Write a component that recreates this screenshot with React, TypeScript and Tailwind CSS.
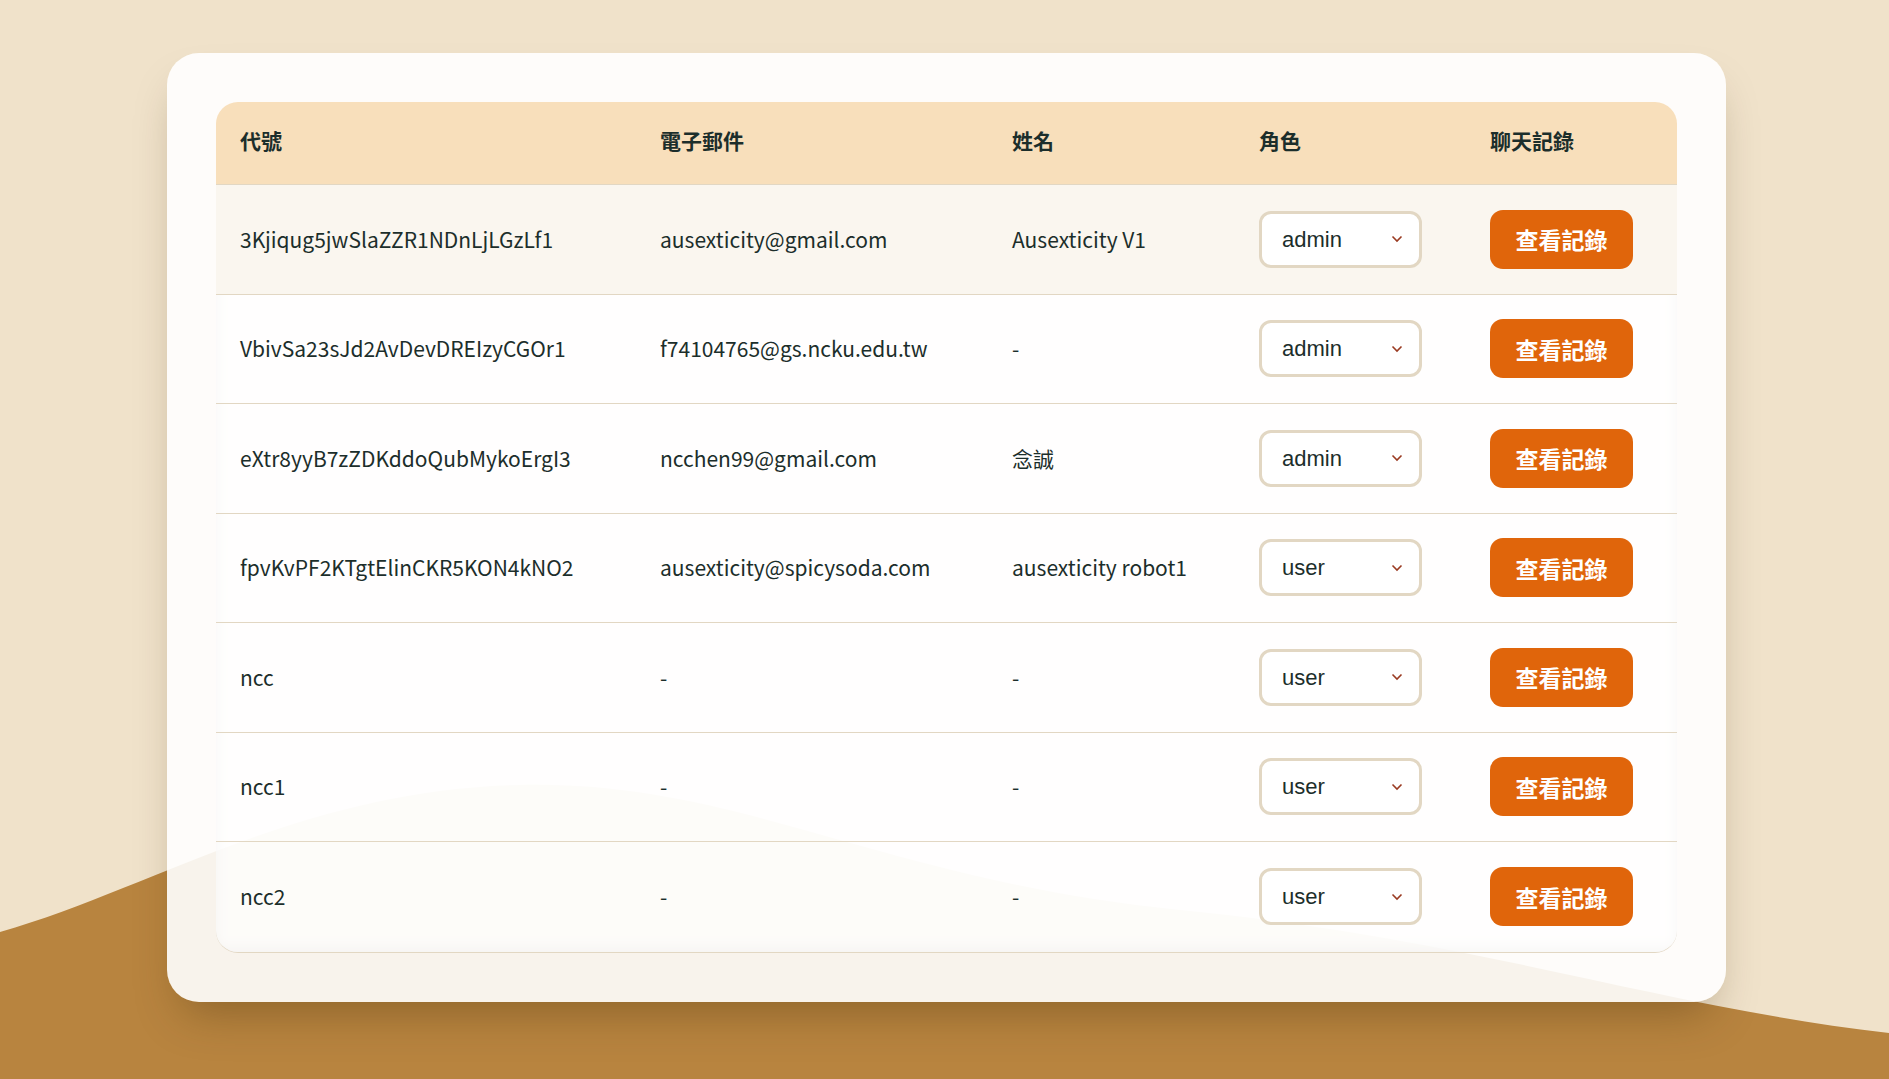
import React from 'react'

const users = [
  { id: '3Kjiqug5jwSlaZZR1NDnLjLGzLf1', email: 'ausexticity@gmail.com', name: 'Ausexticity V1', role: 'admin' },
  { id: 'VbivSa23sJd2AvDevDREIzyCGOr1', email: 'f74104765@gs.ncku.edu.tw', name: '-', role: 'admin' },
  { id: 'eXtr8yyB7zZDKddoQubMykoErgI3', email: 'ncchen99@gmail.com', name: '念誠', role: 'admin' },
  { id: 'fpvKvPF2KTgtElinCKR5KON4kNO2', email: 'ausexticity@spicysoda.com', name: 'ausexticity robot1', role: 'user' },
  { id: 'ncc', email: '-', name: '-', role: 'user' },
  { id: 'ncc1', email: '-', name: '-', role: 'user' },
  { id: 'ncc2', email: '-', name: '-', role: 'user' },
]

const headers = ['代號', '電子郵件', '姓名', '角色', '聊天記錄']

function Wave() {
  return (
    <svg
      className="absolute inset-0 w-full h-full"
      viewBox="0 0 1889 1079"
      preserveAspectRatio="none"
    >
      <path
        d="M0,932 C150,890 300,790 520,785 C740,780 880,880 1180,910 C1480,940 1650,1005 1889,1033 L1889,1079 L0,1079 Z"
        fill="#b8843f"
      />
    </svg>
  )
}

function RoleSelect({ role }: { role: string }) {
  return (
    <div className="relative w-[163px] h-[57px]">
      <select
        defaultValue={role}
        className="appearance-none w-full h-full rounded-[12px] border-[3px] border-[#e2d7c3] bg-white pl-[20px] pr-10 text-[22px] text-[#1c2e2b] outline-none"
        style={{ fontFamily: '"Liberation Sans", Arial, sans-serif' }}
      >
        <option value="admin">admin</option>
        <option value="user">user</option>
      </select>
      <svg
        className="pointer-events-none absolute right-[19px] top-1/2 -translate-y-1/2"
        width="12"
        height="8"
        viewBox="0 0 12 8"
        fill="none"
      >
        <path d="M1.5 1.5 L6 6 L10.5 1.5" stroke="#9a3b22" strokeWidth="1.6" />
      </svg>
    </div>
  )
}

export default function App() {
  return (
    <div
      className="relative min-h-screen w-full overflow-hidden bg-[#f0e2ca]"
      style={{ fontFamily: '"Noto Sans CJK TC", "Noto Sans", sans-serif' }}
    >
      <Wave />
      <div className="relative z-10 pt-[53px] pb-[77px]">
        <div className="ml-[167px] w-[1559px] rounded-[32px] bg-white/90 p-[49px] shadow-[0_25px_45px_-15px_rgba(60,40,10,0.35)]">
          <div className="rounded-[22px] overflow-hidden border-b border-[#e2d7c3]">
            <div className="grid grid-cols-[420px_352px_247px_231px_1fr] h-[83px] items-center pb-1 bg-[#f8dfbb] border-b border-[#e2d7c3] text-[21px] font-bold text-[#1c2e2b]">
              {headers.map((h) => (
                <div key={h} className="pl-6">{h}</div>
              ))}
            </div>
            <div className="shadow-[inset_0_-14px_16px_-12px_rgba(0,0,0,0.13),inset_14px_0_14px_-14px_rgba(0,0,0,0.1),inset_-14px_0_14px_-14px_rgba(0,0,0,0.1)]">
              {users.map((u, i) => (
                <div
                  key={u.id}
                  className={`grid grid-cols-[420px_352px_247px_231px_1fr] h-[109.5px] items-center text-[21px] text-[#1c2e2b] ${
                    i < users.length - 1 ? 'border-b border-[#e2d7c3]' : ''
                  } ${i === 0 ? 'bg-[#faf6ef]' : 'bg-white/70'}`}
                >
                  <div className="pl-6">{u.id}</div>
                  <div className="pl-6">{u.email}</div>
                  <div className="pl-6">{u.name}</div>
                  <div className="pl-6">
                    <RoleSelect role={u.role} />
                  </div>
                  <div className="pl-6">
                    <button className="h-[59px] w-[143px] rounded-[13px] bg-[#e0650b] text-[23px] font-bold text-white">
                      查看記錄
                    </button>
                  </div>
                </div>
              ))}
            </div>
          </div>
        </div>
      </div>
    </div>
  )
}
